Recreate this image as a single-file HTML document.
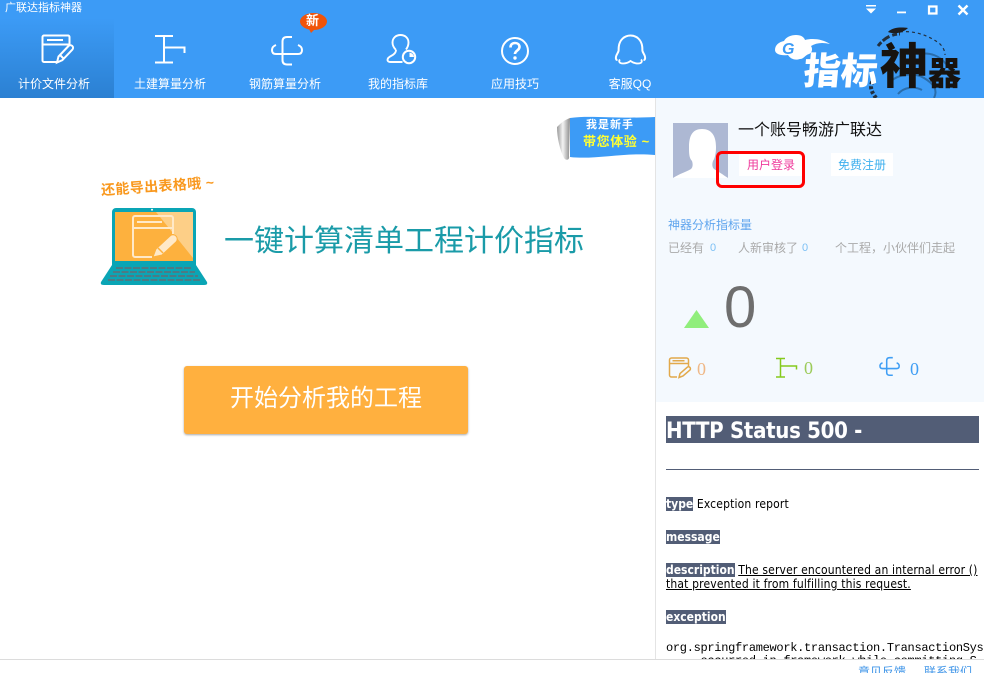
<!DOCTYPE html>
<html lang="zh">
<head>
<meta charset="utf-8">
<title>广联达指标神器</title>
<style>
html,body{margin:0;padding:0;background:#fff}
#app{position:relative;width:984px;height:673px;overflow:hidden;background:#fff;font-family:"Liberation Sans","Noto Sans CJK SC",sans-serif;font-size:12px}
.a{position:absolute;white-space:nowrap;line-height:1}
svg{position:absolute;overflow:visible}
.tab{position:absolute;top:76px;color:#fff;font-size:12px;line-height:16px;text-align:center;white-space:nowrap}
.lbl{background:#525d76;color:#fff;font-weight:bold;letter-spacing:0}
.e{font-family:"DejaVu Sans Condensed","DejaVu Sans",sans-serif;font-size:12px;line-height:15px;letter-spacing:.16px}
</style>
</head>
<body>
<div id="app">
<div class="a" style="left:0;top:0;width:984px;height:98px;background:#3c9bf6"></div>
<div class="a" style="left:0;top:18px;width:114px;height:80px;background:linear-gradient(#3c9bf6,#2b80d2)"></div>
<div class="a" style="left:5px;top:3px;color:#fff;font-size:11px">广联达指标神器</div>

<!-- tab icons -->
<svg style="left:0;top:0" width="700" height="98" fill="none" stroke="#fff" stroke-width="2">
<path d="M58 62H44a1.500 1.500 0 0 1-1.500-1.500V37a1.500 1.500 0 0 1 1.500-1.500h24a1.500 1.500 0 0 1 1.500 1.500v9M43 44.500h26M47 40h16"/>
<path d="M57 62.500l1.500-6 10-10.500a2.500 2.500 0 0 1 3.800 3.700l-10 10.500zM60 55l4 4" stroke-width="2"/>
<path d="M155 36h18M155 62.500h18M164 36v26.500M164 47.500h20.500v5.500"/>
<path d="M292 37h-5q-4.500 0-4.500 4.500V60q0 4.500 4.500 4.500h5"/>
<path d="M276 45q-4 1.500-4 5 0 4 4 4h22q4 0 4-4 0-3.500-4-5"/>
<path d="M396 50c-2-2-3.500-4.500-3.500-7.500 0-4.500 3.500-7.500 8-7.500s8 3 8 7.500c0 3-1 5-2.500 7M396 50c0 3-2 4.500-5 6-3 1.500-3.500 3-3.500 4s1 2 3 2h12" stroke-width="1.900"/>
<circle cx="409" cy="57" r="6.200"/>
<path d="M409.500 52.500a5 5 0 0 1 4.500 4.500h-4.500z" fill="#fff" stroke="none"/>
<circle cx="515" cy="51" r="13"/>
<path d="M510.500 47.500c0-3 2-4.500 4.500-4.500s4.500 1.600 4.500 4c0 3.500-4.500 3.500-4.500 7" stroke-width="2.600"/>
<circle cx="515" cy="58" r="1.700" fill="#fff" stroke="none"/>
<path d="M617.500 60c-1.500 0-2-1.500-1.300-4 .6-2 2-3.500 2.300-5 .3-1 0-2 .3-4.500.8-6.500 5.500-11 11.700-11s10.900 4.500 11.700 11c.3 2.500 0 3.500.3 4.500.3 1.500 1.700 3 2.300 5 .7 2.500.2 4-1.300 4"/>
<path d="M620 59.500c-1.500 1.500-1 4 3 4 3 0 5.500-1 7.500-2.500 2 1.500 4.500 2.500 7.500 2.500 4 0 4.500-2.500 3-4" stroke-width="1.800"/>
</svg>

<div class="tab" style="left:0;width:108px">计价文件分析</div>
<div class="tab" style="left:116px;width:108px">土建算量分析</div>
<div class="tab" style="left:231px;width:108px">钢筋算量分析</div>
<div class="tab" style="left:344px;width:108px">我的指标库</div>
<div class="tab" style="left:465px;width:100px">应用技巧</div>
<div class="tab" style="left:580px;width:100px">客服QQ</div>

<!-- new badge -->
<svg style="left:300px;top:13px" width="28" height="22"><ellipse cx="13.500" cy="8.500" rx="13.500" ry="8.500" fill="#f0540a"/><path d="M8 14l3 6 5-5z" fill="#f0540a"/></svg>
<div class="a" style="left:306px;top:14px;color:#fff;font-size:13px;font-weight:bold">新</div>

<!-- window buttons -->
<svg style="left:860px;top:0" width="120" height="20" fill="#fff">
<path d="M6 5h10v1.500H6zM6 8.500h10l-5 5z"/>
<path d="M37 11.500h9v1.800h-9z"/>
<path fill="none" stroke="#fff" stroke-width="2.200" d="M69 6.500h7.500v7H69z"/>
<path fill="none" stroke="#fff" stroke-width="2.400" d="M98.500 5.500l9 9M107.500 5.500l-9 9"/>
</svg>

<!-- logo -->
<svg style="left:770px;top:20px" width="210" height="78">
<g fill="none" stroke="#1d1d1f" opacity=".85">
<path d="M106 78c-6-8-6-12-3-18" stroke-width="4" stroke-dasharray="3 2"/>
<path d="M108 26c6-8 14-12 22-12" stroke-width="3" stroke-dasharray="5 2 8 3"/>
<path d="M130 12c14-2 30 4 40 12 3 3 5 7 5 11" stroke-width="1.200" stroke-dasharray="3 3"/>
</g>
<path d="M118 12c4-5 14-5 20-4-4 4-12 7-20 4z" fill="#1d1d1f"/>
<g fill="none" stroke="#235a8c" stroke-width="2" opacity=".7">
<path d="M120 62c8-8 24-10 34-4s14 12 10 20"/>
<path d="M128 74c6-7 16-8 24-4"/>
<path d="M150 34c10-2 20 2 26 10"/>
</g>
<path d="M5 30c0-5 4-8 9-9 2-4 7-6 12-6 5 0 8 2 9 5 8-2 17-1 25 4-8-2-14-1-19 2 2 3 1 7-2 8-4 1-5 5-9 5-6 2-10-1-12-4-7 1-13-1-13-5z" fill="#fff"/>
<text x="12" y="34" fill="#3c9bf6" font-family="Liberation Sans" font-weight="bold" font-style="italic" font-size="16">G</text>
</svg>
<div class="a" style="left:804px;top:50px;color:#fff;font:900 37px/1 'Noto Sans CJK SC',sans-serif;transform:skewX(-5deg)">指标</div>
<div class="a" style="left:880px;top:36px;color:#17130f;font:900 48px/1.100 'Noto Sans CJK SC',sans-serif">神</div>
<div class="a" style="left:928px;top:55px;color:#17130f;font:900 33px/1 'Noto Sans CJK SC',sans-serif">器</div>

<!-- ribbon -->
<svg style="left:555px;top:110px" width="101" height="55">
<defs><linearGradient id="g" x1="0" x2="1"><stop offset="0" stop-color="#9a9a9a"/><stop offset=".45" stop-color="#f4f4f4"/><stop offset="1" stop-color="#8a8a8a"/></linearGradient></defs>
<path d="M15 8C35 5 60 9 100 7V45C70 42 40 50 15 47Z" fill="#3c9bf6"/>
<path d="M2 17C5 14 9 10 15 8L14 46C15 50 11 51 9 48 5 40 2 28 2 17Z" fill="url(#g)"/>
</svg>
<div class="a" style="left:586px;top:120px;color:#fff;font-size:11px;font-weight:bold;letter-spacing:1px">我是新手</div>
<div class="a" style="left:583px;top:135px;color:#ffff33;font-size:13px;font-weight:bold;letter-spacing:.6px">带您体验 ~</div>

<!-- main -->
<div class="a" style="left:101px;top:183px;color:#f9981d;font-size:14px;font-weight:bold;letter-spacing:.4px;transform:rotate(-4deg);transform-origin:left center">还能导出表格哦 ~</div>
<svg style="left:100px;top:207px" width="108" height="80">
<path d="M12 5a4 4 0 0 1 4-4h76a4 4 0 0 1 4 4v54H12z" fill="#0aa5b5"/>
<path d="M15 5h78v49H15z" fill="#fdb13e"/>
<path d="M56 5h37v46z" fill="#fdcf87"/>
<path d="M12 58h84l11 17q1 3-3 3H4q-4 0-3-3z" fill="#0aa5b5"/>
<path d="M16 61h76M13 65h82M10 69h88M8 73h92" stroke="#4d7a84" stroke-width="2" stroke-dasharray="7 1.500"/>
<circle cx="52" cy="2.800" r="1" fill="#fff"/>
<g fill="none" stroke="#ffe9c8" stroke-width="2">
<path d="M52 50H35a2 2 0 0 1-2-2V11a2 2 0 0 1 2-2h36a2 2 0 0 1 2 2v16M33 21h40"/>
<path d="M37 15h25"/>
</g>
<path d="M53 50l3-8 14-13a4 4 0 0 1 6 6L62 48z" fill="#ffe9c8" stroke="#fdb13e" stroke-width="1"/>
<path d="M58 41l5 5" stroke="#fdb13e" stroke-width="1.500"/>
</svg>
<div class="a" style="left:224px;top:227px;color:#1a9ba8;font-size:30px;line-height:30px">一键计算清单工程计价指标</div>
<div class="a" style="left:184px;top:366px;width:284px;height:68px;background:#ffb03f;border-radius:3px;box-shadow:0 1px 2px rgba(0,0,0,.35);color:#fff;font-size:24px;line-height:66px;text-align:center">开始分析我的工程</div>

<!-- right panel -->
<div class="a" style="left:655px;top:98px;width:1px;height:561px;background:#e4e4e4"></div>
<div class="a" style="left:656px;top:98px;width:328px;height:304px;background:#f4f9fe"></div>

<svg style="left:673px;top:123px" width="56" height="56">
<rect width="55" height="55" fill="#adb8d3"/>
<path d="M0 55c6-4 13-6 18-9 2-2 2-5 1-8-3-3-3-8-3-14 0-12 4-18 13-18s14 6 14 18c0 6-1 11-3 14-1 3-1 6 1 8 5 3 8 5 14 9z" fill="#fff"/>
</svg>
<div class="a" style="left:738px;top:123px;color:#111;font-size:16px">一个账号畅游广联达</div>
<div class="a" style="left:739px;top:153px;width:64px;height:23px;background:#fff;color:#ef3a9b;line-height:25px;text-align:center">用户登录</div>
<div class="a" style="left:716px;top:151px;width:83px;height:31px;border:3px solid #f00;border-radius:6px"></div>
<div class="a" style="left:831px;top:153px;width:62px;height:23px;background:#fff;color:#3fb0ee;line-height:25px;text-align:center">免费注册</div>

<div class="a" style="left:668px;top:219px;color:#5fa5ee">神器分析指标量</div>
<div class="a" style="left:668px;top:242px;color:#aaa">已经有</div>
<div class="a" style="left:710px;top:243px;color:#7cc0f5;font-size:11px">0</div>
<div class="a" style="left:738px;top:242px;color:#aaa">人新审核了</div>
<div class="a" style="left:802px;top:243px;color:#7cc0f5;font-size:11px">0</div>
<div class="a" style="left:835px;top:242px;color:#aaa">个工程，小伙伴们走起</div>

<svg style="left:684px;top:310px" width="26" height="18"><path d="M12.500 0L25 18H0z" fill="#90ee7c"/></svg>
<div class="a" style="left:724px;top:279px;color:#6e6e6e;font-size:58px;line-height:58px">0</div>

<svg style="left:660px;top:350px" width="260" height="32" fill="none" stroke-width="1.500">
<g stroke="#e2a94b">
<path d="M17 27H11.500a2 2 0 0 1-2-2V10a2 2 0 0 1 2-2h15a2 2 0 0 1 2 2v6M9.500 13.500h19M12.500 10.800h12"/>
<path d="M19 27.500l1-4 7-6a1.800 1.800 0 0 1 3 2.500l-7 6z" fill="#f4f9fe"/>
</g>
<path d="M116 8.500h9M116 27h9M120.500 8.500V27M120.500 16h16v3.500" stroke="#85ca1d"/>
<g transform="translate(45.900 -16) scale(.64)" stroke="#3f9ef4" stroke-width="2.400">
<path d="M292 37h-5q-4.500 0-4.500 4.500V60q0 4.500 4.500 4.500h5"/>
<path d="M276 45q-4 1.500-4 5 0 4 4 4h22q4 0 4-4 0-3.500-4-5"/>
</g>
</svg>
<div class="a" style="left:697px;top:360px;color:#efb887;font:18px/1 'Liberation Serif',serif">0</div>
<div class="a" style="left:804px;top:359px;color:#9ccb5a;font:18px/1 'Liberation Serif',serif">0</div>
<div class="a" style="left:910px;top:360px;color:#3f9ef4;font:18px/1 'Liberation Serif',serif">0</div>

<!-- error page -->
<div class="a" style="left:666px;top:416px;width:313px;height:27px;background:#525d76;color:#fff;font:bold 22px/31px 'DejaVu Sans Condensed','DejaVu Sans',sans-serif;letter-spacing:-.3px;overflow:hidden">HTTP Status 500 -</div>
<div class="a" style="left:666px;top:469px;width:313px;height:1px;background:#525d76"></div>
<div class="a e" style="left:666px;top:497px"><span class="lbl">type</span> Exception report</div>
<div class="a e" style="left:666px;top:530px"><span class="lbl">message</span></div>
<div class="a e" style="left:666px;top:563px"><span class="lbl">description</span> <u>The server encountered an internal error ()</u></div>
<div class="a e" style="left:666px;top:577px"><u>that prevented it from fulfilling this request.</u></div>
<div class="a e" style="left:666px;top:610px"><span class="lbl">exception</span></div>
<div style="position:absolute;left:666px;top:642px;width:318px;height:17px;overflow:hidden;font:12px/13px 'Liberation Mono',monospace;letter-spacing:-.3px;color:#000;white-space:pre">org.springframework.transaction.TransactionSystemException
     occurred in framework while committing S H</div>

<!-- footer -->
<div class="a" style="left:0;top:659px;width:984px;height:14px;background:#fff;border-top:1px solid #dcdcdc;box-sizing:border-box"></div>
<div style="position:absolute;left:858px;top:660px;width:126px;height:13px;overflow:hidden;color:#3f95e8;font-size:12px;line-height:24px;white-space:nowrap">意见反馈<span style="margin-left:18px">联系我们</span></div>
</div>
</body>
</html>
